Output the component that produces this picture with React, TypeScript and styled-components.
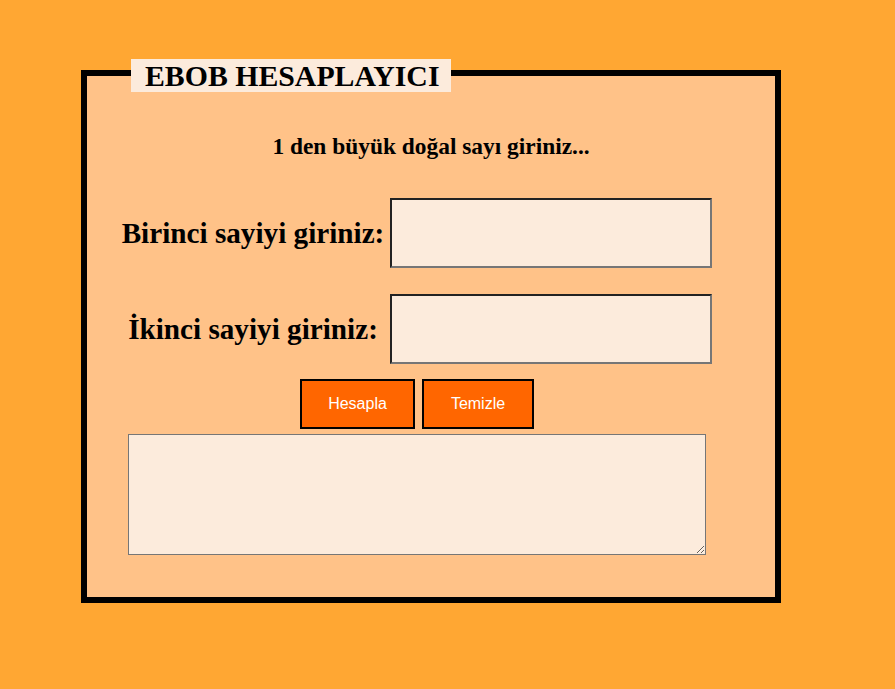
import React from 'react';
import styled, { createGlobalStyle } from 'styled-components';

const GlobalStyle = createGlobalStyle`
  html, body {
    margin: 0;
    padding: 0;
    background: #ffa733;
    font-family: 'Liberation Serif', 'Times New Roman', serif;
  }
`;

const Page = styled.div`
  width: 895px;
  height: 689px;
  padding: 56px 0 0 81px;
  box-sizing: border-box;
`;

const Frame = styled.fieldset`
  width: 700px;
  box-sizing: border-box;
  margin: 0;
  padding: 0 28px 42px 0;
  border: 6px solid #000;
  background: #ffc288;
  min-inline-size: auto;
`;

const Title = styled.legend`
  margin-left: 44px;
  padding: 0 12px 0 14px;
  height: 33px;
  line-height: 33px;
  background: #fcebdc;
  font-size: 29.8px;
  font-weight: 700;
  color: #000;
  transform: translateY(3px);
`;

const Body = styled.div`
  display: flex;
  flex-direction: column;
  align-items: center;
`;

const Hint = styled.div`
  margin-top: 43px;
  padding-left: 28px;
  font-size: 23.4px;
  font-weight: 700;
  line-height: 28px;
`;

const Row = styled.div<{ $top: number }>`
  display: flex;
  align-items: center;
  margin-top: ${({ $top }) => $top}px;
  padding-right: 4px;
`;

const Label = styled.label`
  width: 270px;
  text-align: center;
  font-size: 29.2px;
  font-weight: 700;
  margin-right: 2px;
`;

const NumberInput = styled.input`
  width: 322px;
  height: 70px;
  box-sizing: border-box;
  margin: 0;
  background: #fcebdc;
  border-style: solid;
  border-width: 2px;
  border-color: #222 #767676 #767676 #222;
  outline: none;
`;

const Buttons = styled.div`
  display: flex;
  gap: 7px;
  margin-top: 15px;
`;

const Button = styled.button<{ $w: number }>`
  width: ${({ $w }) => $w}px;
  height: 50px;
  margin: 0;
  background: #ff6600;
  border: 2px solid #000;
  color: #fff;
  font-family: 'Liberation Sans', Arial, sans-serif;
  font-size: 16px;
`;

const Output = styled.textarea`
  width: 578px;
  height: 121px;
  box-sizing: border-box;
  margin: 5px 0 0;
  background: #fcebdc;
  border: 1px solid #767676;
  outline: none;
`;

export default function App() {
  return (
    <>
      <GlobalStyle />
      <Page>
        <Frame>
          <Title>EBOB HESAPLAYICI</Title>
          <Body>
            <Hint>1 den büyük doğal sayı giriniz...</Hint>
            <Row $top={38}>
              <Label>Birinci sayiyi giriniz:</Label>
              <NumberInput type="text" />
            </Row>
            <Row $top={26}>
              <Label>İkinci sayiyi giriniz:</Label>
              <NumberInput type="text" />
            </Row>
            <Buttons>
              <Button $w={115}>Hesapla</Button>
              <Button $w={112}>Temizle</Button>
            </Buttons>
            <Output />
          </Body>
        </Frame>
      </Page>
    </>
  );
}
